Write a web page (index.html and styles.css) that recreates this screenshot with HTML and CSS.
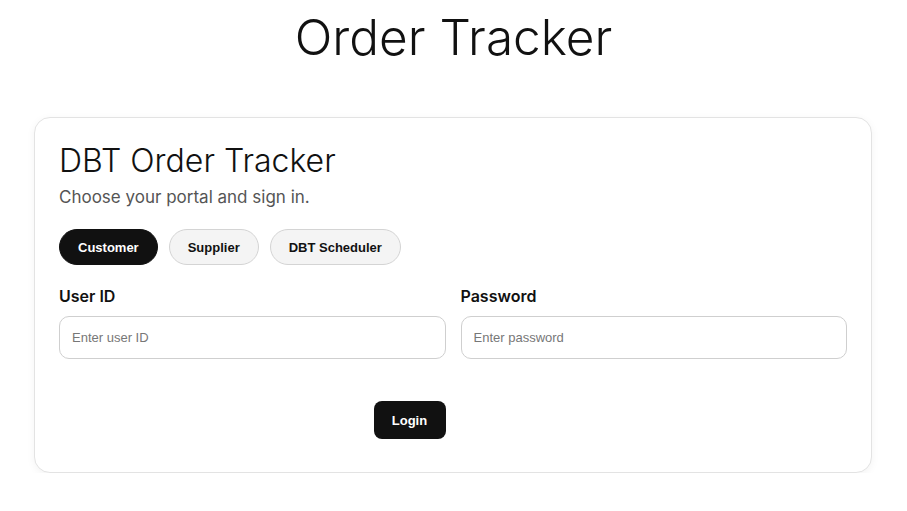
FILE: index.html
```html
<!DOCTYPE html>
<html lang="en">
<head>
<meta charset="utf-8">
<title>Order Tracker</title>
<link rel="stylesheet" href="styles.css">
</head>
<body>
<h1 class="page-title">Order Tracker</h1>
<main class="card">
  <h2 class="card-title">DBT Order Tracker</h2>
  <p class="card-sub">Choose your portal and sign in.</p>
  <div class="tabs">
    <button class="tab active">Customer</button>
    <button class="tab">Supplier</button>
    <button class="tab">DBT Scheduler</button>
  </div>
  <form class="form">
    <label class="field">
      <span class="label">User ID</span>
      <input class="input" type="text" placeholder="Enter user ID">
    </label>
    <label class="field">
      <span class="label">Password</span>
      <input class="input" type="password" placeholder="Enter password">
    </label>
    <button class="login" type="button">Login</button>
  </form>
</main>
</body>
</html>
```

FILE: styles.css
```css
* { box-sizing: border-box; }
body {
  margin: 8px;
  background: #fff;
  font-family: Inter, "Noto Sans", sans-serif;
  color: #111;
}
.page-title {
  margin: 0;
  text-align: center;
  font-size: 49.5px;
  font-weight: 300;
  line-height: 58px;
  color: #111;
}
.card {
  margin: 51px 27px 0 26px;
  border: 1px solid #e3e3e3;
  border-radius: 16px;
  box-shadow: 0 2px 8px rgba(0,0,0,0.05);
  padding: 23px 24px 33px 24px;
  background: #fff;
}
.card-title {
  margin: 0;
  font-size: 32px;
  font-weight: 300;
  line-height: 39px;
  color: #111;
}
.card-sub {
  margin: 7px 0 0 0;
  font-size: 17px;
  line-height: 21px;
  color: #555;
}
.tabs {
  display: flex;
  gap: 11px;
  margin-top: 21px;
}
.tab {
  height: 36px;
  padding: 0 18px;
  border-radius: 18px;
  border: 1px solid #d4d4d4;
  background: #f4f4f4;
  font-family: "Liberation Sans", Arial, sans-serif;
  font-weight: 700;
  font-size: 13px;
  color: #111;
}
.tab.active {
  background: #111;
  border-color: #111;
  color: #fff;
}
.form {
  display: grid;
  grid-template-columns: 1fr 1fr;
  column-gap: 15px;
  margin-top: 22px;
}
.field {
  display: flex;
  flex-direction: column;
}
.label {
  font-size: 16px;
  font-weight: 600;
  line-height: 19px;
  color: #111;
  margin-bottom: 10px;
}
.input {
  height: 43px;
  border: 1px solid #cfcfcf;
  border-radius: 10px;
  padding: 0 12px;
  font-family: "Liberation Sans", Arial, sans-serif;
  font-size: 13px;
  color: #111;
  background: #fff;
}
.input::placeholder { color: #777; }
.login {
  grid-column: 1;
  justify-self: end;
  margin-top: 42px;
  height: 38px;
  width: 72px;
  border: none;
  border-radius: 8px;
  background: #111;
  color: #fff;
  font-family: "Liberation Sans", Arial, sans-serif;
  font-weight: 700;
  font-size: 13px;
}
```
